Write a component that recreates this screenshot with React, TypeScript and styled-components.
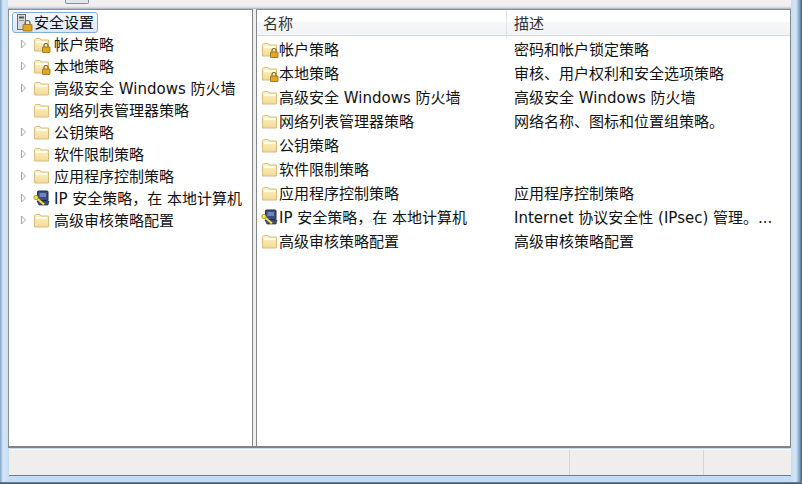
import { createGlobalStyle } from "styled-components";
import styled from "styled-components";

const GlobalStyle = createGlobalStyle`
  html, body { margin: 0; padding: 0; background: #cfe2f4; }
  body { font-family: "DejaVu Sans", "Noto Sans CJK SC", sans-serif; }
`;

const Frame = styled.div`
  width: 802px;
  height: 484px;
  box-sizing: border-box;
  display: flex;
  flex-direction: column;
  overflow: hidden;
  background: linear-gradient(90deg, #7fa2c6 0, #d5e5f5 3px, #c4dcf3 8px, #c4dcf3 790px, #d3e4f4 796px, #6f97c0 800px, #4a5560 802px);
`;

const TopStrip = styled.div`
  height: 9px;
  flex: none;
  margin: 0 11px 0 8px;
  background: linear-gradient(#f2eff0 0, #f1eeee 6px, #dfe3ee 7px, #c6cad6 8px, #a9adb6 9px);
  display: flex;
  padding-left: 57px;
  box-sizing: border-box;
`;

const ToolbarStub = styled.div`
  width: 22px;
  height: 3px;
  border: 1px solid #8a8f96;
  border-top: 0;
  border-radius: 0 0 2px 2px;
  background: #e3e6ea;
`;

const Panes = styled.div`
  flex: none;
  height: 439px;
  margin: 0 11px 0 8px;
  display: flex;
  background: #f0eded;
  border-bottom: 2px solid #7f8487;
  box-sizing: border-box;
`;

const TreePane = styled.div`
  width: 245px;
  flex: none;
  background: #fff;
  border-top: 1px solid #8b8f94;
  border-left: 1px solid #8b8f94;
  border-right: 1px solid #85898c;
  box-sizing: border-box;
  padding-top: 2px;
`;

const Splitter = styled.div`
  width: 3px;
  flex: none;
  background: #f0eded;
`;

const ListPane = styled.div`
  flex: 1;
  background: #fff;
  border-top: 1px solid #8b8f94;
  border-left: 1px solid #85898c;
  border-right: 1px solid #85898c;
  box-sizing: border-box;
`;

const HeaderRow = styled.div`
  height: 26px;
  display: grid;
  grid-template-columns: 250px 1fr;
  background: linear-gradient(#fff 0, #fff 45%, #f5f6f7 50%, #f3f4f5 100%);
  border-bottom: 1px solid #d5d8dc;
  box-sizing: border-box;
`;

const HeaderCell = styled.div<{ $divider?: boolean }>`
  padding-left: ${(p) => (p.$divider ? "6px" : "7px")};
  border-right: ${(p) => (p.$divider ? "1px solid #e0e3e6" : "none")};
  font-size: 15px;
  line-height: 28px;
  color: #333;
  box-sizing: border-box;
`;

const Rows = styled.div`
  padding-top: 1px;
`;

const ListRow = styled.div`
  height: 24px;
  display: grid;
  grid-template-columns: 250px 1fr;
  align-items: center;
  font-size: 15px;
  color: #111;
`;

const NameCell = styled.div`
  display: flex;
  align-items: center;
  padding-left: 4px;
  white-space: nowrap;
`;

const DescCell = styled.div`
  padding: 0 0 2px 7px;
  white-space: nowrap;
`;

const TreeRow = styled.div`
  height: 22px;
  display: flex;
  align-items: center;
  font-size: 15px;
  color: #111;
  white-space: nowrap;
`;

const RootRow = styled.div`
  display: flex;
  width: fit-content;
  align-items: center;
  height: 21px;
  box-sizing: border-box;
  margin-left: 3px;
  padding: 0 3px 0 2px;
  gap: 1px;
  font-size: 15px;
  color: #111;
  border: 1px solid #84acdd;
  border-radius: 3px;
  background: linear-gradient(#f2f7fd, #d9e8f9);
`;

const ArrowSlot = styled.div`
  width: 24px;
  flex: none;
  display: flex;
  justify-content: flex-end;
  padding-right: 6px;
  box-sizing: border-box;
`;

const Label = styled.span<{ $gap?: number }>`
  margin-left: ${(p) => p.$gap ?? 0}px;
  padding-bottom: 2px;
`;

const StatusBar = styled.div`
  height: 27px;
  flex: none;
  margin: 1px 11px 0 9px;
  display: grid;
  grid-template-columns: 561px 134px 1fr;
  background: #f0eded;
  border-bottom: 1px solid #6f7d8c;
  border-top: 1px solid #fff;
  box-sizing: border-box;
`;

const StatusCell = styled.div<{ $last?: boolean }>`
  border-right: ${(p) => (p.$last ? "none" : "1px solid #d8d6d4")};
`;

const BottomEdge = styled.div`
  margin-top: auto;
  height: 2px;
  flex: none;
  background: linear-gradient(#6f8fae, #3c4650);
`;

function Arrow() {
  return (
    <svg width="7" height="10" viewBox="0 0 7 10">
      <path d="M1.5 1 L5.5 5 L1.5 9 Z" fill="#fff" stroke="#a6a6a6" />
    </svg>
  );
}

function Folder({ lock }: { lock?: boolean }) {
  return (
    <svg width="18" height="17" viewBox="0 0 18 17" style={{ flex: "none" }}>
      <defs>
        <linearGradient id="folderBody" x1="0" y1="0" x2="0" y2="1">
          <stop offset="0" stopColor="#fff4c8" />
          <stop offset="1" stopColor="#f3d998" />
        </linearGradient>
      </defs>
      <path
        d="M1.5 4.5 V15 H15.5 V4 H8 L7 2.5 H2.5 L1.5 3.5 Z"
        fill="url(#folderBody)"
        stroke="#d8bc7a"
        strokeWidth="1"
      />
      <rect x="3" y="5" width="11" height="2" fill="#fffdf0" />
      {lock && <Lock />}
    </svg>
  );
}

function Lock() {
  return (
    <g>
      <path d="M11 11 V9.5 a2 2 0 0 1 4 0 V11" fill="none" stroke="#6f6238" strokeWidth="1.1" />
      <rect x="9.5" y="11" width="7.5" height="5.5" rx="0.5" fill="#e2a81f" stroke="#8f6a12" strokeWidth="0.8" />
    </g>
  );
}

function RootIcon() {
  return (
    <svg width="18" height="18" viewBox="0 0 18 18" style={{ flex: "none" }}>
      <rect x="2.5" y="0.5" width="8" height="15" fill="#d8dadc" stroke="#6c7074" />
      <rect x="4" y="2.5" width="5" height="2" fill="#50555a" />
      <rect x="4" y="6" width="5" height="1" fill="#8a8e92" />
      <path d="M10 10.5 V9 a2.5 2.5 0 0 1 5 0 V10.5" fill="none" stroke="#7a6a3a" strokeWidth="1.2" />
      <rect x="8" y="10.5" width="9" height="6.5" rx="0.5" fill="#e2a81f" stroke="#8f6a12" strokeWidth="0.8" />
    </svg>
  );
}

function IpIcon() {
  return (
    <svg width="18" height="17" viewBox="0 0 18 17" style={{ flex: "none" }}>
      <rect x="4.5" y="1" width="10.5" height="9.5" rx="1" fill="#3c4c80" stroke="#1f2a4a" />
      <rect x="6.5" y="3" width="6.5" height="4" fill="#6f84ba" />
      <path d="M4 11 H16 L15 15 H6 Z" fill="#3f4e76" stroke="#1f2a4a" strokeWidth="0.7" />
      <path d="M3 7.5 L11 14.5" stroke="#f0de3c" strokeWidth="2.2" />
      <circle cx="3" cy="7.5" r="2.2" fill="#f4e24e" stroke="#7b7220" strokeWidth="0.6" />
    </svg>
  );
}

type Kind = "lock" | "folder" | "ip";

const items: { name: string; desc: string; kind: Kind; arrow: boolean }[] = [
  { name: "帐户策略", desc: "密码和帐户锁定策略", kind: "lock", arrow: true },
  { name: "本地策略", desc: "审核、用户权利和安全选项策略", kind: "lock", arrow: true },
  { name: "高级安全 Windows 防火墙", desc: "高级安全 Windows 防火墙", kind: "folder", arrow: true },
  { name: "网络列表管理器策略", desc: "网络名称、图标和位置组策略。", kind: "folder", arrow: false },
  { name: "公钥策略", desc: "", kind: "folder", arrow: true },
  { name: "软件限制策略", desc: "", kind: "folder", arrow: true },
  { name: "应用程序控制策略", desc: "应用程序控制策略", kind: "folder", arrow: true },
  { name: "IP 安全策略，在 本地计算机", desc: "Internet 协议安全性 (IPsec) 管理。...", kind: "ip", arrow: true },
  { name: "高级审核策略配置", desc: "高级审核策略配置", kind: "folder", arrow: true },
];

function ItemIcon({ kind }: { kind: Kind }) {
  if (kind === "ip") return <IpIcon />;
  return <Folder lock={kind === "lock"} />;
}

export default function App() {
  return (
    <Frame>
      <GlobalStyle />
      <TopStrip>
        <ToolbarStub />
      </TopStrip>
      <Panes>
        <TreePane>
          <RootRow>
            <RootIcon />
            <Label>安全设置</Label>
          </RootRow>
          {items.map((item) => (
            <TreeRow key={item.name}>
              <ArrowSlot>{item.arrow && <Arrow />}</ArrowSlot>
              <ItemIcon kind={item.kind} />
              <Label $gap={3}>{item.name}</Label>
            </TreeRow>
          ))}
        </TreePane>
        <Splitter />
        <ListPane>
          <HeaderRow>
            <HeaderCell $divider>名称</HeaderCell>
            <HeaderCell>描述</HeaderCell>
          </HeaderRow>
          <Rows>
            {items.map((item) => (
              <ListRow key={item.name}>
                <NameCell>
                  <ItemIcon kind={item.kind} />
                  <Label>{item.name}</Label>
                </NameCell>
                <DescCell>{item.desc}</DescCell>
              </ListRow>
            ))}
          </Rows>
        </ListPane>
      </Panes>
      <StatusBar>
        <StatusCell />
        <StatusCell />
        <StatusCell $last />
      </StatusBar>
      <BottomEdge />
    </Frame>
  );
}
